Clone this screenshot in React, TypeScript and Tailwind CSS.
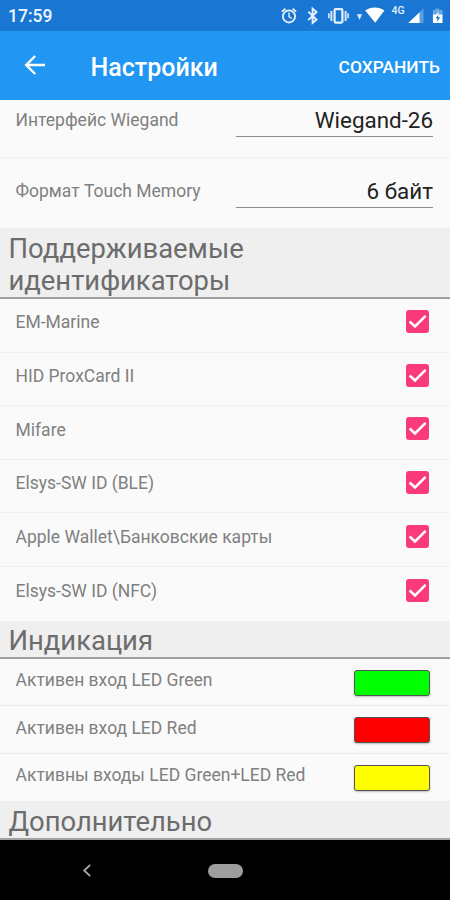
import React from "react";

const LABEL = "whitespace-nowrap text-[17.5px] leading-[20px] text-[#808080]";

function StatusIcons() {
  return (
    <svg width="170" height="30" viewBox="280 0 170 30" fill="none" aria-hidden="true">
      {/* alarm */}
      <g stroke="#e6f1fc" strokeWidth="1.8">
        <circle cx="289" cy="16.4" r="6.1" />
        <path d="M281.8 11.6l3.6-3M296.2 11.6l-3.6-3" />
        <path d="M289 12.4v4.3l2.8 1.8" strokeWidth="1.4" />
      </g>
      {/* bluetooth */}
      <path d="M308.3 11.6l8.2 8.2-3.9 3.2V8.6l3.9 3.4-8.2 8.2" stroke="#e6f1fc" strokeWidth="1.9" />
      {/* vibrate */}
      <rect x="334.6" y="9.2" width="7.8" height="13.4" rx="1" stroke="#e6f1fc" strokeWidth="2.2" />
      <path d="M331.4 11v10M345.6 11v10" stroke="#d3e5f8" strokeWidth="2" />
      <path d="M328.9 13.3v5M348.1 13.3v5" stroke="#d3e5f8" strokeWidth="1.7" />
      {/* wifi */}
      <path d="M356.9 14.2h5.2l-2.6 5.6z" fill="#e6f1fc" />
      <path d="M365.2 10.4c5.4-4 14-4 19.2 0L375.2 22.8z" fill="#fff" />
      {/* mobile signal */}
      <path d="M423.5 8.2V23h-15z" fill="#5c9fe0" />
      <path d="M419.5 12.4V23H408.3z" fill="#fff" />
      {/* battery */}
      <path d="M435.3 8.4h4v1.6h3.2v5h-9.6v-5h2.4z" fill="#6aa8e4" />
      <path d="M432.9 14.5h9.6V23h-9.6z" fill="#fff" />
      <path d="M438.3 11.2v4.6h2l-3.2 5.4v-4h-2z" fill="#fff" />
      <path d="M438.2 15v2.2h1.9l-2.8 4.6v-3.6h-1.7z" fill="#1976d2" />
    </svg>
  );
}

function SelectRow({ label, value, className }: { label: string; value: string; className: string }) {
  return (
    <div className={`flex items-start justify-between pl-[15.5px] pr-[17px] ${className}`}>
      <span className={`${LABEL} mt-[2px]`}>{label}</span>
      <div className="flex h-[29px] w-[197.5px] items-start justify-end border-b border-[#8c8c8c]">
        <span className="whitespace-nowrap text-[22.4px] leading-6 text-[#222]">{value}</span>
      </div>
    </div>
  );
}

function CheckRow({ label, last }: { label: string; last?: boolean }) {
  return (
    <div className={`flex h-[53.7px] items-center justify-between pb-[7px] pl-[15.5px] pr-[21px] ${last ? "" : "border-b border-[#f0f0f0]"}`}>
      <span className={`${LABEL} mt-[1.5px]`}>{label}</span>
      <span className="flex h-[23px] w-[23px] items-center justify-center rounded-[3px] bg-[#fb3a7c]">
        <svg width="23" height="23" viewBox="0 0 23 23" fill="none" aria-hidden="true">
          <path d="M3.6 11.5l5.4 5L19.6 5.9" stroke="#fff" strokeWidth="2.5" />
        </svg>
      </span>
    </div>
  );
}

function ColorRow({ label, color, last }: { label: string; color: string; last?: boolean }) {
  return (
    <div className={`flex h-[47.5px] items-start justify-between pl-[15.5px] pr-5 pt-[11px] ${last ? "" : "border-b border-[#ececec]"}`}>
      <span className={`${LABEL} mt-[0.6px]`}>{label}</span>
      <span className={`h-[26px] w-[76px] rounded-[3px] border-[1.5px] border-[#555] shadow-[0_1px_2px_rgba(0,0,0,0.25)] ${color}`} />
    </div>
  );
}

function SectionTitle({ children, className }: { children: React.ReactNode; className: string }) {
  return (
    <h2 className={`border-b-2 border-[#a0a0a0] bg-[#efefef] pl-[8.5px] text-[27.4px] leading-8 text-[#6c6c6c] ${className}`}>
      {children}
    </h2>
  );
}

export default function App() {
  return (
    <div className="flex h-[900px] w-[450px] flex-col overflow-hidden bg-[#fafafa] font-[Roboto,sans-serif]">
      <div className="flex h-[30.5px] shrink-0 items-center justify-between bg-[#1976d2] pl-2">
        <span className="mt-[2px] text-[17.5px] font-medium leading-5 text-[#eef6fe]">17:59</span>
        <div className="relative h-[30px] w-[170px]">
          <StatusIcons />
          <span className="absolute left-[111.5px] top-[5px] text-[10.5px] font-medium leading-3 text-[#e6f1fc]">4G</span>
        </div>
      </div>
      <header className="flex h-[69.5px] shrink-0 items-center bg-[#2196f3] pr-[10px] text-white">
        <svg className="ml-6" width="22" height="22" viewBox="0 0 22 22" fill="none" aria-hidden="true">
          <path d="M21 11H2.5M11.2 2L2.2 11l9 9" stroke="#fff" strokeWidth="2.4" />
        </svg>
        <h1 className="ml-[44.5px] mt-[5px] whitespace-nowrap text-[25px] font-medium leading-8">Настройки</h1>
        <span className="ml-auto mt-[3px] whitespace-nowrap text-[17.4px] font-medium leading-6">СОХРАНИТЬ</span>
      </header>
      <main className="flex h-[740px] shrink-0 flex-col">
        <SelectRow label="Интерфейс Wiegand" value="Wiegand-26" className="h-[58px] border-b border-[#f0f0f0] pt-[8px]" />
        <SelectRow label="Формат Touch Memory" value="6 байт" className="h-[70px] pt-[21px]" />
        <SectionTitle className="h-[71px] pt-[5px]">
          Поддерживаемые<br />идентификаторы
        </SectionTitle>
        <CheckRow label="EM-Marine" />
        <CheckRow label="HID ProxCard II" />
        <CheckRow label="Mifare" />
        <CheckRow label="Elsys-SW ID (BLE)" />
        <CheckRow label="Apple Wallet\Банковские карты" />
        <CheckRow label="Elsys-SW ID (NFC)" last />
        <SectionTitle className="h-[38px] pt-[4.5px]">Индикация</SectionTitle>
        <ColorRow label="Активен вход LED Green" color="bg-[#00ff00]" />
        <ColorRow label="Активен вход LED Red" color="bg-[#ff0000]" />
        <ColorRow label="Активны входы LED Green+LED Red" color="bg-[#ffff00]" last />
        <SectionTitle className="h-[39px] pt-[5px]">Дополнительно</SectionTitle>
      </main>
      <nav className="flex h-[60px] shrink-0 items-center bg-black">
        <svg className="ml-[82px]" width="10" height="14" viewBox="0 0 10 14" fill="none" aria-hidden="true">
          <path d="M8.2 1.8L2.2 7.5l6 5.7" stroke="#a8a8a8" strokeWidth="1.8" />
        </svg>
        <span className="ml-[116px] mt-px h-[14px] w-[35px] rounded-full bg-[#9e9e9e]" />
      </nav>
    </div>
  );
}
